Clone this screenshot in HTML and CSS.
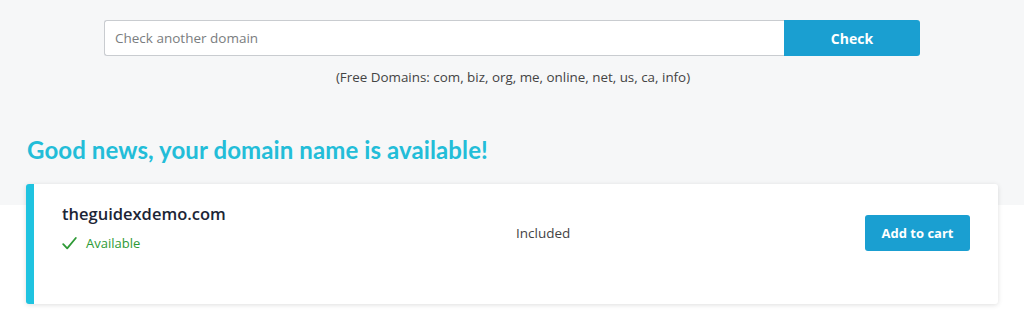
FILE: index.html
```html
<!DOCTYPE html>
<html lang="en">
<head>
<meta charset="utf-8">
<title>Domain check</title>
<link rel="stylesheet" href="styles.css">
</head>
<body>
<div class="page">
  <form class="search">
    <input class="search-input" type="text" placeholder="Check another domain">
    <button class="search-btn" type="button">Check</button>
  </form>
  <p class="free">(Free Domains: com, biz, org, me, online, net, us, ca, info)</p>
  <h2 class="headline">Good news, your domain name is available!</h2>
  <div class="card">
    <div class="card-main">
      <div class="domain">theguidexdemo.com</div>
      <div class="status">
        <svg class="check" width="15" height="13" viewBox="0 0 15 13"><path d="M1.2 7.2 L5.2 11.4 L13.8 1" fill="none" stroke="#2e9a36" stroke-width="1.8" stroke-linecap="round" stroke-linejoin="round"/></svg>
        <span>Available</span>
      </div>
    </div>
    <div class="card-price">Included</div>
    <div class="card-action"><button class="cart-btn" type="button">Add to cart</button></div>
  </div>
</div>
</body>
</html>
```
FILE: styles.css
```css
html, body {
  margin: 0;
  padding: 0;
}
body {
  background: linear-gradient(#f6f7f8 0, #f6f7f8 205px, #ffffff 205px);
  font-family: "Open Sans", "Liberation Sans", sans-serif;
  color: #333;
  width: 1024px;
  height: 330px;
  overflow: hidden;
}
.page {
  padding: 20px 26px 0 26px;
}
.search {
  display: flex;
  width: 816px;
  margin: 0 0 0 78px;
  height: 36px;
}
.search-input {
  flex: 1;
  box-sizing: border-box;
  height: 36px;
  border: 1px solid #c9ccd0;
  border-right: none;
  border-radius: 3px 0 0 3px;
  padding: 0 10px;
  font-family: "Open Sans", sans-serif;
  font-size: 13.5px;
  color: #333;
  background: #fff;
  outline: none;
}
.search-input::placeholder {
  color: #7a7d80;
}
.search-btn {
  width: 136px;
  height: 36px;
  border: none;
  border-radius: 0 3px 3px 0;
  background: #1a9fd1;
  color: #fff;
  font-family: "Open Sans", sans-serif;
  font-weight: 700;
  font-size: 14px;
}
.free {
  margin: 11px 0 0 0;
  text-align: center;
  font-size: 13.4px;
  line-height: 20px;
  color: #444;
  padding-left: 2px;
}
.headline {
  margin: 48px 0 0 1px;
  font-family: "Lato", "Open Sans", sans-serif;
  font-weight: 700;
  font-size: 24px;
  line-height: 30px;
  color: #23bdd8;
  letter-spacing: 0.1px;
}
.card {
  margin-top: 19px;
  width: 972px;
  height: 120px;
  box-sizing: border-box;
  background: #fff;
  border-left: 8px solid #1fc3e0;
  border-radius: 3px;
  box-shadow: 0 1px 5px rgba(0, 0, 0, 0.13);
  display: grid;
  grid-template-columns: 454px 1fr auto;
  padding: 20px 28px 0 28px;
  align-items: start;
}
.domain {
  font-size: 16.5px;
  font-weight: 600;
  color: #1c2536;
  line-height: 20px;
}
.status {
  display: flex;
  align-items: center;
  gap: 9px;
  margin-top: 9px;
  font-size: 13px;
  color: #2e9a36;
  line-height: 20px;
}
.check {
  display: block;
}
.card-price {
  margin-top: 19px;
  font-size: 13.5px;
  line-height: 20px;
  color: #444;
}
.card-action {
  padding-top: 11px;
}
.cart-btn {
  width: 105px;
  height: 36px;
  border: none;
  border-radius: 3px;
  background: #1a9fd1;
  color: #fff;
  font-family: "Open Sans", sans-serif;
  font-weight: 700;
  font-size: 13px;
}
```
